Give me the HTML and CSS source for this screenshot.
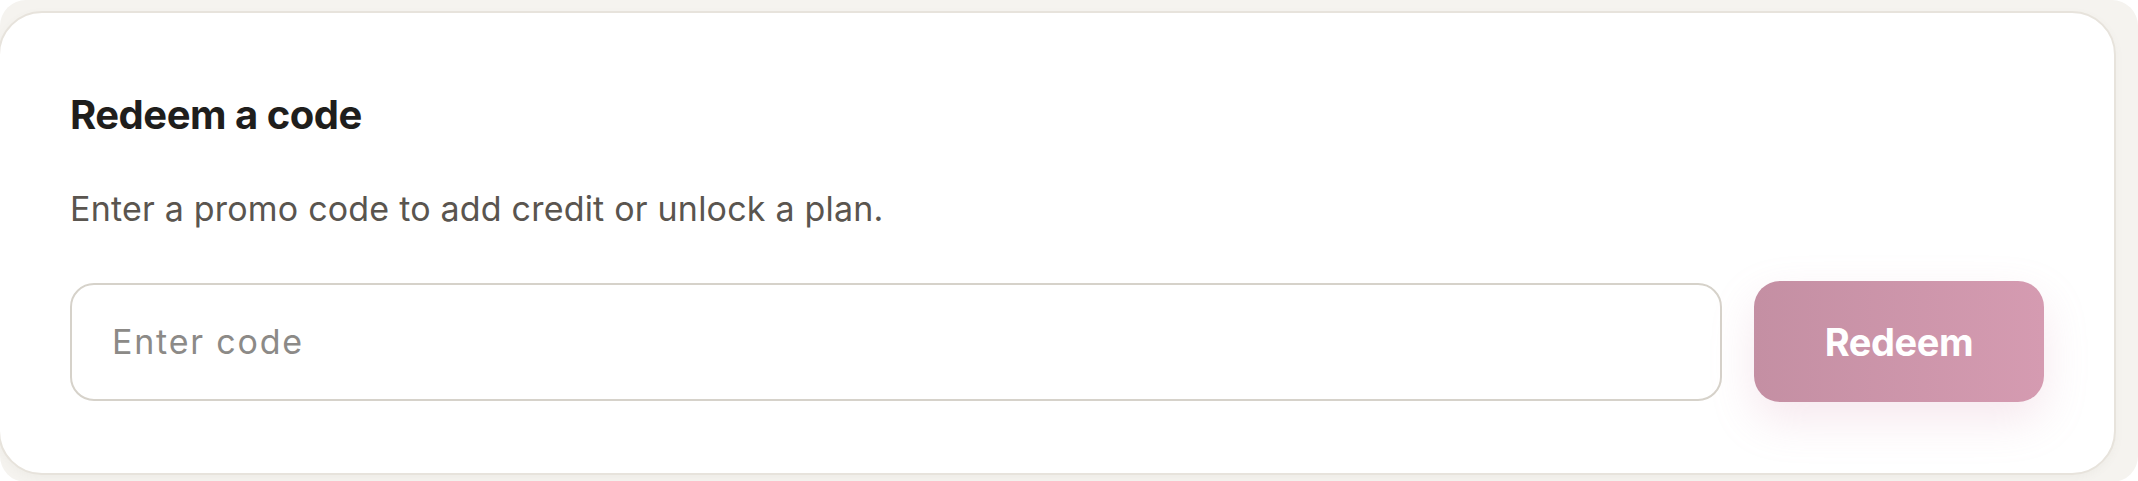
FILE: index.html
```html
<!DOCTYPE html>
<html lang="en">
<head>
    <meta charset="UTF-8">
    <meta name="viewport" content="width=device-width, initial-scale=1.0">
    <title>Redeem a code</title>
    <link rel="stylesheet" href="styles.css">
</head>
<body>
    <div class="panel">
        <section class="card">
            <h2 class="card-title">Redeem a code</h2>
            <p class="card-text">Enter a promo code to add credit or unlock a plan.</p>

            <form class="redeem-row" onsubmit="return false;">
                <input class="code-input" type="text" placeholder="Enter code">
                <button class="redeem-btn" type="submit">Redeem</button>
            </form>
        </section>
    </div>
</body>
</html>
```

FILE: styles.css
```css
body {
    margin: 0;
    background-color: #ffffff;
    font-family: 'Inter', 'Noto Sans', sans-serif;
}

.panel {
    background-color: #f5f3ef;
    border-radius: 26px;
    padding: 11px 22px 7px 0;
}

.card {
    margin-left: -2px;
    background-color: #ffffff;
    border: 2px solid #e7e3dc;
    border-radius: 44px;
    padding: 78px 70px 71px 70px;
    box-shadow: 0 3px 8px rgba(120, 110, 90, 0.05);
}

.card-title {
    margin: 0;
    font-size: 40px;
    line-height: 48px;
    font-weight: 700;
    color: #1f1e1c;
    letter-spacing: -0.5px;
}

.card-text {
    margin: 46px 0 0 0;
    font-size: 34px;
    line-height: 48px;
    font-weight: 400;
    color: #5a554f;
    letter-spacing: 0.2px;
}

.redeem-row {
    display: flex;
    align-items: center;
    gap: 32px;
    margin-top: 48px;
}

.code-input {
    flex: 1;
    box-sizing: border-box;
    height: 118px;
    padding: 0 40px;
    border: 2px solid #d6d2ca;
    border-radius: 24px;
    background-color: #ffffff;
    font-family: inherit;
    font-size: 34px;
    color: #1f1e1c;
    outline: none;
}

.code-input::placeholder {
    color: #8c8a87;
    letter-spacing: 1.8px;
}

.redeem-btn {
    width: 290px;
    height: 121px;
    border: none;
    border-radius: 26px;
    background: linear-gradient(90deg, #c48fa3, #d59bb1);
    color: #ffffff;
    font-family: inherit;
    font-size: 38px;
    font-weight: 700;
    letter-spacing: -0.4px;
    cursor: pointer;
    box-shadow: 0 18px 44px rgba(214, 150, 178, 0.22);
}
```
